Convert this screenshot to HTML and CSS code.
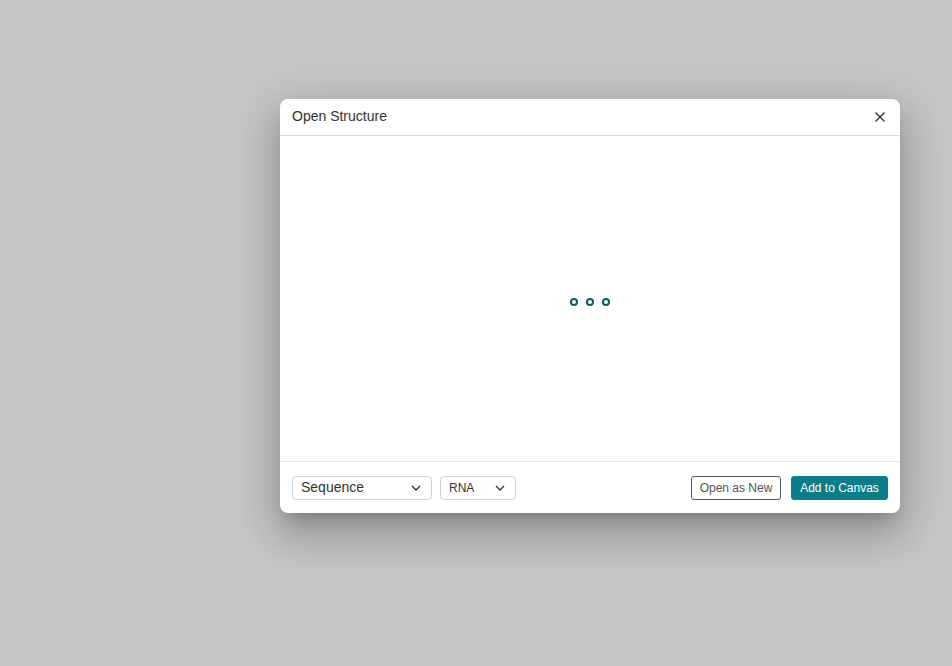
FILE: index.html
```html
<!DOCTYPE html>
<html>
<head>
<meta charset="utf-8">
<link rel="stylesheet" href="styles.css">
</head>
<body>
<div class="backdrop">
  <div class="dialog">
    <div class="header">
      <span class="title">Open Structure</span>
      <button class="close" aria-label="Close">
        <svg width="12" height="12" viewBox="0 0 12 12"><path d="M1.5 1.5L10.5 10.5M10.5 1.5L1.5 10.5" stroke="#333" stroke-width="1.4" fill="none"/></svg>
      </button>
    </div>
    <div class="body">
      <div class="loader"><span></span><span></span><span></span></div>
    </div>
    <div class="footer">
      <div class="select sel-wide"><span class="sel-text big">Sequence</span>
        <svg width="10" height="6" viewBox="0 0 10 6"><path d="M1 1l4 4 4-4" stroke="#333" stroke-width="1.3" fill="none"/></svg></div>
      <div class="select sel-narrow"><span class="sel-text">RNA</span>
        <svg width="10" height="6" viewBox="0 0 10 6"><path d="M1 1l4 4 4-4" stroke="#333" stroke-width="1.3" fill="none"/></svg></div>
      <div class="spacer"></div>
      <button class="btn secondary">Open as New</button>
      <button class="btn primary">Add to Canvas</button>
    </div>
  </div>
</div>
</body>
</html>
```
FILE: styles.css
```css
html, body { margin: 0; padding: 0; }
body {
  width: 952px; height: 666px; overflow: hidden;
  background: #c5c5c5;
  font-family: "Liberation Sans", Arial, sans-serif;
  color: #333;
}
.backdrop {
  padding: 99px 0 0 280px;
}
.dialog {
  width: 620px; height: 414px;
  background: #fff;
  border-radius: 8px;
  display: flex; flex-direction: column;
  box-shadow: 0 11px 15px -7px rgba(0,0,0,.2), 0 24px 38px 3px rgba(0,0,0,.14), 0 9px 46px 8px rgba(0,0,0,.12);
}
.header {
  height: 37px; box-sizing: border-box;
  border-bottom: 1px solid #d4dbe3;
  display: flex; align-items: center; justify-content: space-between;
  padding: 0 12px;
}
.title { font-size: 14px; color: #333; margin-top: -2px; }
.close {
  border: 0; background: none; padding: 0; width: 16px; height: 16px;
  display: flex; align-items: center; justify-content: center; margin-top: 0;
}
.body {
  flex: 1;
  display: flex; align-items: center; justify-content: center;
  padding-top: 6px;
}
.loader { display: flex; gap: 8px; }
.loader span {
  width: 8px; height: 8px; box-sizing: border-box;
  border: 2.5px solid #0d5a66; border-radius: 50%;
}
.footer {
  height: 52px; box-sizing: border-box;
  border-top: 1px solid #e4e7eb;
  display: flex; align-items: center;
  padding: 0 12px 0 12px;
  gap: 8px;
}
.select {
  height: 24px; box-sizing: border-box;
  border: 1px solid #ccd3dc; border-radius: 4px;
  display: flex; align-items: center; justify-content: space-between;
  padding: 0 10px 0 8px;
}
.sel-wide { width: 140px; }
.sel-narrow { width: 76px; }
.sel-text { font-size: 12px; color: #333; }
.sel-text.big { font-size: 14px; margin-top: -2px; }
.spacer { flex: 1; }
.btn {
  height: 24px; box-sizing: border-box;
  font-family: "Liberation Sans", Arial, sans-serif; font-size: 12px;
  border-radius: 3px; padding: 0; cursor: pointer; white-space: nowrap;
}
.btn.secondary { border: 1px solid #5a5a5a; background: #fff; color: #555; margin-right: 2px; width: 90px; }
.btn.primary { border: 1px solid #0a7e88; background: #0a7e88; color: #fff; width: 97px; }
```
